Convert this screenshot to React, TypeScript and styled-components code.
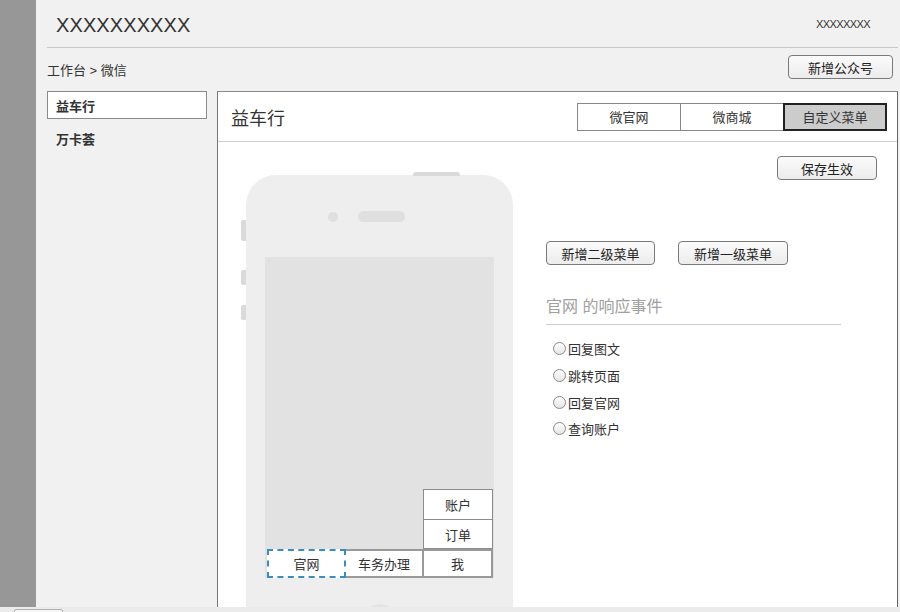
import * as React from 'react';
import styled, { createGlobalStyle } from 'styled-components';

const GlobalStyle = createGlobalStyle`
    html, body {
        margin: 0;
        padding: 0;
        background: #f1f1f1;
    }
    body {
        font-family: "Liberation Sans", "Noto Sans CJK SC", sans-serif;
        color: #333;
    }
`;

const Page = styled.div`
    position: relative;
    display: flex;
    width: 900px;
    height: 612px;
    overflow: hidden;
    background: #f1f1f1;
`;

const LeftBar = styled.div`
    width: 36px;
    flex-shrink: 0;
    background: #979797;
`;

const Main = styled.div`
    flex: 1;
    display: flex;
    flex-direction: column;
    padding: 0 2px 0 11px;
    min-width: 0;
`;

const Header = styled.div`
    height: 47px;
    flex-shrink: 0;
    display: flex;
    align-items: center;
    justify-content: space-between;
    border-bottom: 1px solid #c8c8c8;
`;

const Brand = styled.div`
    padding: 3px 0 0 9px;
    font-size: 20px;
    color: #333;
    letter-spacing: 0.1px;
`;

const UserName = styled.div`
    padding-right: 28px;
    font-size: 11px;
    letter-spacing: -0.6px;
    color: #333;
`;

const Toolbar = styled.div`
    height: 43px;
    flex-shrink: 0;
    display: flex;
    align-items: flex-start;
    justify-content: space-between;
`;

const Breadcrumb = styled.div`
    margin-top: 12px;
    font-size: 13px;
    color: #333;
`;

const Button = styled.button<{ $width: number }>`
    width: ${p => p.$width}px;
    height: 24px;
    padding: 0;
    border: 1px solid #7a7a7a;
    border-radius: 4px;
    background: linear-gradient(#fbfbfb, #ececec);
    font-family: "Liberation Sans", "Noto Sans CJK SC", sans-serif;
    font-size: 13px;
    color: #222;
    cursor: pointer;
`;

const ToolbarButton = styled(Button)`
    margin: 7px 5px 0 0;
`;

const Content = styled.div`
    flex: 1;
    display: flex;
    gap: 10px;
    min-height: 0;
`;

const Sidebar = styled.div`
    width: 160px;
    flex-shrink: 0;
    display: flex;
    flex-direction: column;
    gap: 5px;
`;

const SideItem = styled.div<{ $active?: boolean }>`
    height: 28px;
    box-sizing: border-box;
    display: flex;
    align-items: center;
    padding-left: 8px;
    font-size: 13px;
    font-weight: bold;
    color: #333;
    background: ${p => (p.$active ? '#fff' : 'transparent')};
    border: 1px solid ${p => (p.$active ? '#8a8a8a' : 'transparent')};
`;

const Panel = styled.div`
    flex: 1;
    display: flex;
    flex-direction: column;
    background: #fff;
    border: 1px solid #8a8a8a;
    border-left-color: #777;
    border-right-color: #666;
`;

const PanelHeader = styled.div`
    height: 49px;
    flex-shrink: 0;
    display: flex;
    align-items: center;
    justify-content: space-between;
    padding: 0 10px 0 13px;
    border-bottom: 1px solid #cfcfcf;
`;

const PanelTitle = styled.div`
    font-size: 18px;
    color: #333;
`;

const Tabs = styled.div`
    display: flex;
`;

const Tab = styled.div<{ $active?: boolean }>`
    position: relative;
    width: 104px;
    height: 28px;
    box-sizing: border-box;
    margin-left: -1px;
    display: flex;
    align-items: center;
    justify-content: center;
    font-size: 13px;
    color: #333;
    background: ${p => (p.$active ? '#cccccc' : '#fff')};
    border: ${p => (p.$active ? '2px solid #222' : '1px solid #888')};
    z-index: ${p => (p.$active ? 1 : 0)};
`;

const PanelBody = styled.div`
    flex: 1;
    display: flex;
`;

const Phone = styled.div`
    position: relative;
    width: 267px;
    height: 470px;
    flex-shrink: 0;
    margin: 33px 0 0 28px;
    border-radius: 30px 30px 0 0;
    background: #eeeeee;
    display: flex;
    flex-direction: column;
`;

const TopKey = styled.div`
    position: absolute;
    top: -3px;
    right: 53px;
    width: 47px;
    height: 4px;
    border-radius: 3px 3px 0 0;
    background: #dadada;
`;

const SideKey = styled.div<{ $top: number; $height: number }>`
    position: absolute;
    left: -5px;
    top: ${p => p.$top}px;
    width: 5px;
    height: ${p => p.$height}px;
    border-radius: 2px 0 0 2px;
    background: #dadada;
`;

const SensorRow = styled.div`
    display: flex;
    align-items: center;
    gap: 20px;
    margin-top: 36px;
    padding-left: 82px;
`;

const Camera = styled.div`
    width: 10px;
    height: 10px;
    border-radius: 50%;
    background: #dfdfdf;
`;

const Speaker = styled.div`
    width: 47px;
    height: 11px;
    border-radius: 6px;
    background: #dfdfdf;
`;

const Screen = styled.div`
    width: 229px;
    height: 321px;
    margin: 35px 0 0 19px;
    background: #e2e2e2;
    display: flex;
    flex-direction: column;
    justify-content: flex-end;
    padding: 0 1px 0 2px;
    box-sizing: border-box;
`;

const SubMenu = styled.div`
    align-self: flex-end;
    width: 70px;
    display: flex;
    flex-direction: column;
`;

const SubItem = styled.div<{ $height: number }>`
    height: ${p => p.$height}px;
    box-sizing: border-box;
    display: flex;
    align-items: center;
    justify-content: center;
    background: #fff;
    border: 1px solid #8c8c8c;
    font-size: 13px;
    color: #333;

    & + & {
        margin-top: -1px;
    }
`;

const MenuBar = styled.div`
    display: flex;
    height: 29px;
`;

const MenuItem = styled.div<{ $width: number; $selected?: boolean }>`
    width: ${p => p.$width}px;
    box-sizing: border-box;
    display: flex;
    align-items: center;
    justify-content: center;
    background: #fff;
    font-size: 13px;
    color: #333;
    border: 2px ${p => (p.$selected ? 'dashed #3b8dbd' : 'solid #999')};
    border-left-width: ${p => (p.$selected ? 2 : 0)}px;
`;

const HomeKey = styled.div`
    width: 40px;
    height: 40px;
    margin: 26px auto 0;
    border-radius: 50%;
    background: #e4e4e4;
`;

const Editor = styled.div`
    flex: 1;
    display: flex;
    flex-direction: column;
    margin-left: 33px;
    padding: 14px 20px 0 0;
`;

const SaveRow = styled.div`
    display: flex;
    justify-content: flex-end;
`;

const ActionRow = styled.div`
    display: flex;
    gap: 23px;
    margin-top: 61px;
`;

const EventTitle = styled.div`
    width: 295px;
    margin-top: 31px;
    padding-bottom: 6px;
    border-bottom: 1px solid #cfcfcf;
    font-size: 16px;
    line-height: 22px;
    color: #a0a0a0;
`;

const RadioList = styled.div`
    display: flex;
    flex-direction: column;
    margin-top: 9px;
    padding-left: 7px;
`;

const RadioRow = styled.label<{ $height: number }>`
    height: ${p => p.$height}px;
    display: flex;
    align-items: center;
    gap: 2px;
    font-size: 13px;
    color: #333;
`;

const RadioDot = styled.span`
    width: 11px;
    height: 11px;
    border-radius: 50%;
    border: 1px solid #8a8a8a;
    background: linear-gradient(#fdfdfd, #e6e6e6);
`;

const ScrollBar = styled.div`
    position: absolute;
    left: 0;
    right: 0;
    bottom: 0;
    height: 5px;
    background: #ebebeb;
`;

const ScrollThumb = styled.div`
    position: absolute;
    left: 14px;
    top: 2px;
    width: 47px;
    height: 6px;
    border: 1px solid #b0b0b0;
    border-radius: 2px 2px 0 0;
    background: #f6f6f6;
`;

const tabs = ['微官网', '微商城', '自定义菜单'];
const events = [
    { label: '回复图文', height: 28 },
    { label: '跳转页面', height: 27 },
    { label: '回复官网', height: 26 },
    { label: '查询账户', height: 26 }
];

export default function App() {
    const [activeTab, setActiveTab] = React.useState(2);
    const [activeAccount, setActiveAccount] = React.useState(0);

    return (
        <>
            <GlobalStyle />
            <Page>
                <LeftBar />
                <Main>
                    <Header>
                        <Brand>XXXXXXXXXX</Brand>
                        <UserName>XXXXXXXX</UserName>
                    </Header>
                    <Toolbar>
                        <Breadcrumb>工作台 &gt; 微信</Breadcrumb>
                        <ToolbarButton $width={105}>新增公众号</ToolbarButton>
                    </Toolbar>
                    <Content>
                        <Sidebar>
                            {['益车行', '万卡荟'].map((name, i) => (
                                <SideItem key={name} $active={activeAccount === i} onClick={() => setActiveAccount(i)}>
                                    {name}
                                </SideItem>
                            ))}
                        </Sidebar>
                        <Panel>
                            <PanelHeader>
                                <PanelTitle>益车行</PanelTitle>
                                <Tabs>
                                    {tabs.map((t, i) => (
                                        <Tab key={t} $active={activeTab === i} onClick={() => setActiveTab(i)}>
                                            {t}
                                        </Tab>
                                    ))}
                                </Tabs>
                            </PanelHeader>
                            <PanelBody>
                                <Phone>
                                    <TopKey />
                                    <SideKey $top={45} $height={21} />
                                    <SideKey $top={95} $height={15} />
                                    <SideKey $top={130} $height={15} />
                                    <SensorRow>
                                        <Camera />
                                        <Speaker />
                                    </SensorRow>
                                    <Screen>
                                        <SubMenu>
                                            <SubItem $height={31}>账户</SubItem>
                                            <SubItem $height={30}>订单</SubItem>
                                        </SubMenu>
                                        <MenuBar>
                                            <MenuItem $width={79} $selected>官网</MenuItem>
                                            <MenuItem $width={78}>车务办理</MenuItem>
                                            <MenuItem $width={69}>我</MenuItem>
                                        </MenuBar>
                                    </Screen>
                                    <HomeKey />
                                </Phone>
                                <Editor>
                                    <SaveRow>
                                        <Button $width={100}>保存生效</Button>
                                    </SaveRow>
                                    <ActionRow>
                                        <Button $width={109}>新增二级菜单</Button>
                                        <Button $width={110}>新增一级菜单</Button>
                                    </ActionRow>
                                    <EventTitle>官网 的响应事件</EventTitle>
                                    <RadioList>
                                        {events.map(e => (
                                            <RadioRow key={e.label} $height={e.height}>
                                                <RadioDot />
                                                {e.label}
                                            </RadioRow>
                                        ))}
                                    </RadioList>
                                </Editor>
                            </PanelBody>
                        </Panel>
                    </Content>
                </Main>
                <ScrollBar>
                    <ScrollThumb />
                </ScrollBar>
            </Page>
        </>
    );
}
